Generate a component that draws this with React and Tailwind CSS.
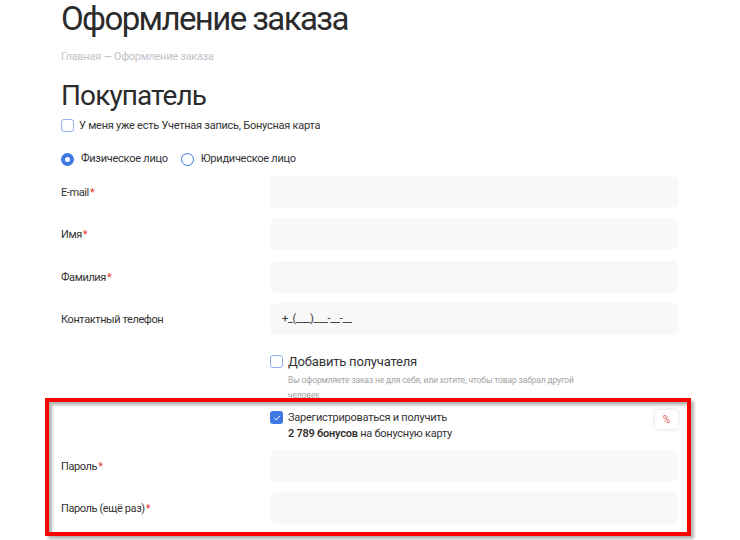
import React from 'react';

const Star = () => <span className="text-[#e53935] ml-[1px]">*</span>;

const Field = ({ label, required, value }) => (
  <div className="flex items-center h-[32px]">
    <div className="w-[209px] pt-[3px] text-[11px] tracking-[-0.4px] text-[#333]">
      {label}
      {required && <Star />}
    </div>
    <div className="w-[408px] h-full rounded-[6px] bg-[#f8f8f8] flex items-center px-[12px] text-[11px] tracking-[-0.3px] text-[#333]">
      {value}
    </div>
  </div>
);

const Box = ({ checked }) =>
  checked ? (
    <span className="w-[13px] h-[13px] rounded-[3px] bg-[#3d78e3] flex items-center justify-center shrink-0">
      <svg width="8" height="8" viewBox="0 0 8 8" fill="none">
        <path d="M1.5 4.2 3.2 5.8 6.5 2.3" stroke="#fff" strokeWidth="1" strokeLinecap="round" strokeLinejoin="round" />
      </svg>
    </span>
  ) : (
    <span className="w-[13px] h-[13px] rounded-[3px] border border-[#8fb0ee] bg-white shrink-0" />
  );

export default function App() {
  return (
    <div className="min-h-screen bg-white pl-[61px]" style={{ fontFamily: 'Roboto, "Noto Sans", sans-serif' }}>
      <h1 className="pt-[1px] text-[33px] leading-[36px] tracking-[-1.6px] text-[#2b2b2b] font-normal">Оформление заказа</h1>
      <div className="mt-[12px] text-[11px] tracking-[-0.3px] text-[#bfc3cb]">Главная — Оформление заказа</div>

      <h2 className="mt-[13px] text-[28px] leading-[34px] tracking-[-0.9px] text-[#2b2b2b] font-normal">Покупатель</h2>
      <label className="mt-[5px] flex items-center gap-[5px] text-[11px] tracking-[-0.25px] text-[#333]">
        <Box />
        <span>У меня уже есть Учетная запись, Бонусная карта</span>
      </label>

      <div className="mt-[17px] flex items-center text-[11px] tracking-[-0.25px] text-[#333]">
        <span className="w-[13px] h-[13px] rounded-full bg-[#3d78e3] flex items-center justify-center">
          <span className="w-[5px] h-[5px] rounded-full bg-white" />
        </span>
        <span className="ml-[7px]">Физическое лицо</span>
        <span className="ml-[13px] w-[13px] h-[13px] rounded-full border-[1.5px] border-[#3d78e3]" />
        <span className="ml-[7px]">Юридическое лицо</span>
      </div>

      <div className="mt-[8px] flex flex-col gap-[10.5px]">
        <Field label="E-mail" required />
        <Field label="Имя" required />
        <Field label="Фамилия" required />
        <Field label="Контактный телефон" value="+_(___)___-__-__" />
      </div>

      <div className="ml-[209px] mt-[17px] w-[310px]">
        <div className="flex items-center gap-[5px] text-[13px] tracking-[-0.2px] text-[#333]">
          <Box />
          <span>Добавить получателя</span>
        </div>
        <div className="mt-[1px] ml-[18px] text-[8.5px] leading-[15px] tracking-[-0.15px] text-[#a3a3a3]">
          Вы оформляете заказ не для себя, или хотите, чтобы товар забрал другой человек
        </div>
      </div>

      <div className="relative -ml-[16px] w-[646px] -mt-[5px] pl-[16px] pt-[12px] pb-[11.5px]">
        <div className="flex">
          <div className="w-[209px] shrink-0" />
          <div className="w-[408px] flex items-start">
            <div className="flex-1 text-[11px] tracking-[-0.25px] text-[#333]">
              <div className="flex items-center gap-[5px]">
                <Box checked />
                <span>Зарегистрироваться и получить</span>
              </div>
              <div className="ml-[18px]">
                <b className="font-semibold">2 789 бонусов</b> на бонусную карту
              </div>
            </div>
            <div className="w-[23px] h-[19px] rounded-[4px] bg-white shadow-[0_0_4px_rgba(0,0,0,0.15)] flex items-center justify-center text-[10px] text-[#d9534f]">
              %
            </div>
          </div>
        </div>
        <div className="mt-[7px] flex flex-col gap-[10.5px]">
          <Field label="Пароль" required />
          <Field label="Пароль (ещё раз)" required />
        </div>
        <div className="pointer-events-none absolute inset-0 border-[4px] border-[#ff0000] shadow-[3px_3px_3px_rgba(0,0,0,0.3),inset_3px_3px_3px_rgba(0,0,0,0.3)]" />
      </div>
    </div>
  );
}
